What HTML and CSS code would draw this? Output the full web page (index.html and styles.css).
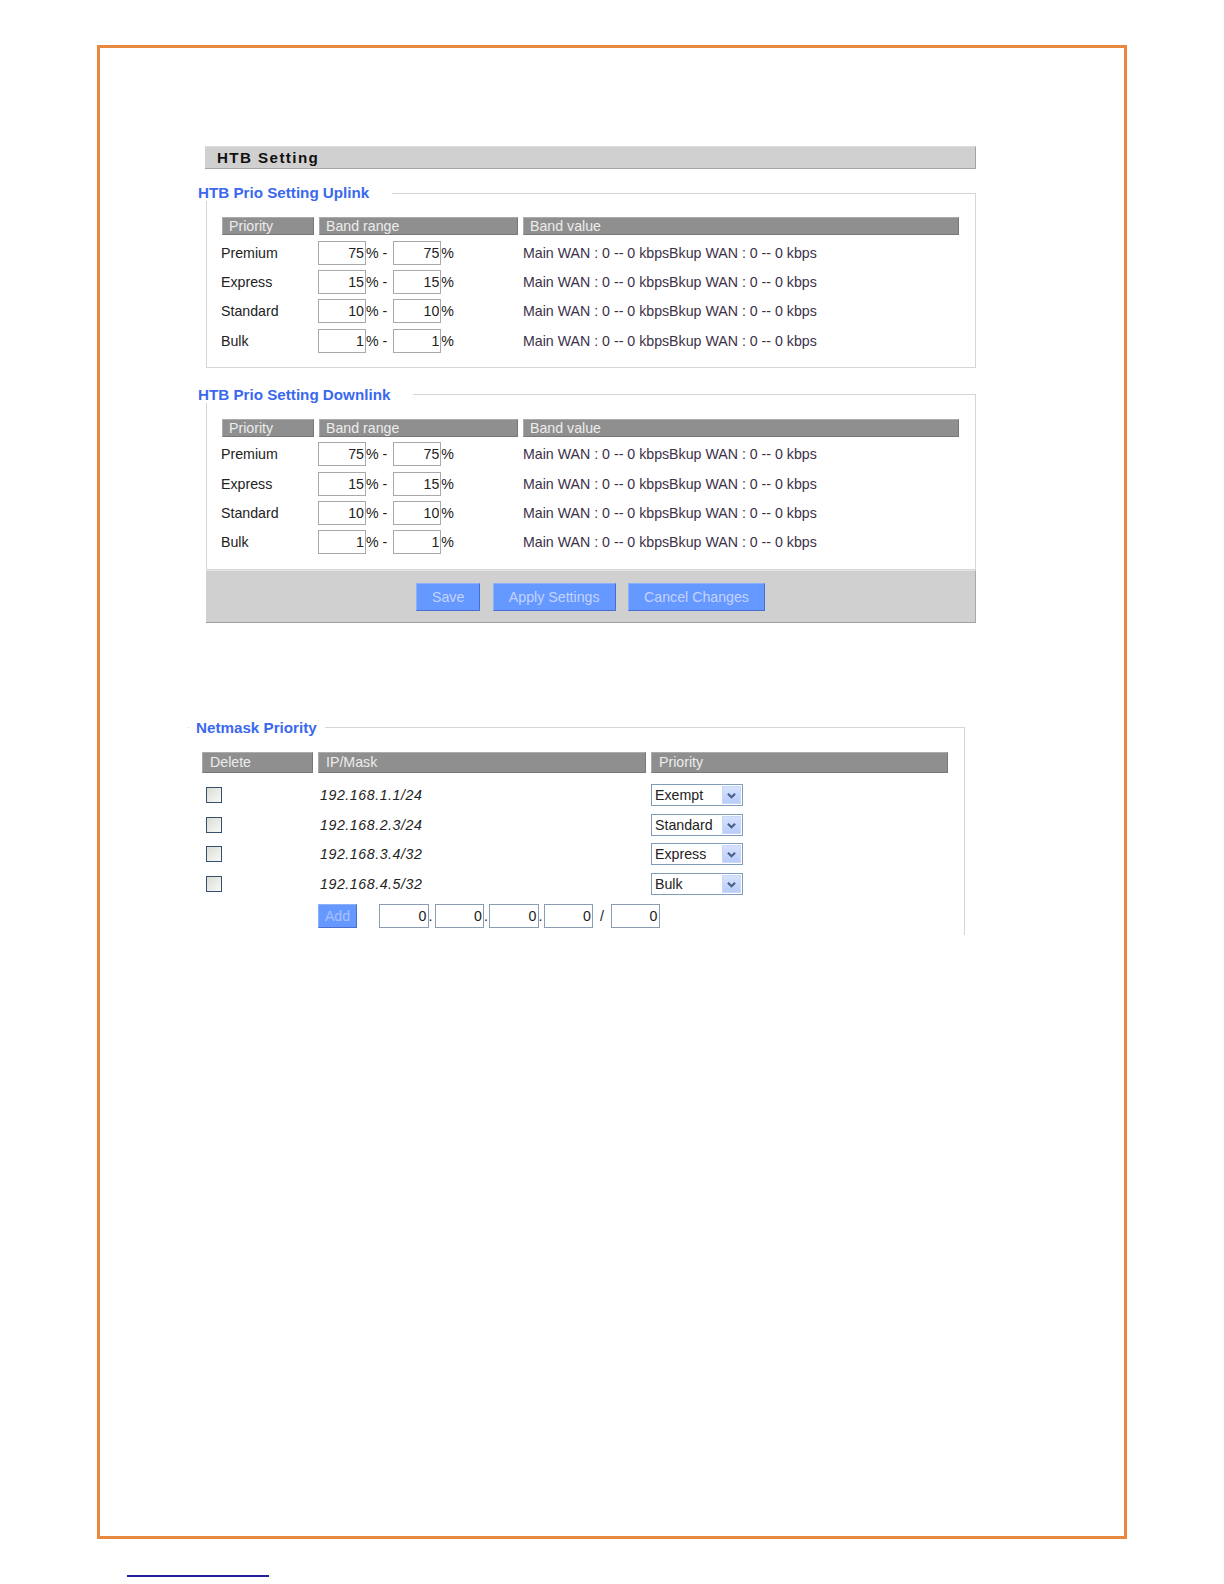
FILE: index.html
```html
<!DOCTYPE html>
<html lang="en">

<head>
    <meta charset="UTF-8" />
    <meta name="viewport" content="width=device-width, initial-scale=1" />
    <title>HTB Setting</title>
    <link rel="stylesheet" href="styles.css">
</head>

<body>
    <div class="sheet">
        <div class="panel">
            <div class="panel-title">HTB Setting</div>

            <fieldset class="prio-set">
                <legend>HTB Prio Setting Uplink</legend>
                <div class="prio-head">
                    <div class="th">Priority</div>
                    <div class="th">Band range</div>
                    <div class="th">Band value</div>
                </div>
                <div class="prio-row">
                    <div class="label">Premium</div>
                    <div class="range"><input type="text" value="75"><span class="unit">% -</span><input type="text" value="75"><span>%</span></div>
                    <div class="value">Main WAN : 0 -- 0 kbpsBkup WAN : 0 -- 0 kbps</div>
                </div>
                <div class="prio-row">
                    <div class="label">Express</div>
                    <div class="range"><input type="text" value="15"><span class="unit">% -</span><input type="text" value="15"><span>%</span></div>
                    <div class="value">Main WAN : 0 -- 0 kbpsBkup WAN : 0 -- 0 kbps</div>
                </div>
                <div class="prio-row">
                    <div class="label">Standard</div>
                    <div class="range"><input type="text" value="10"><span class="unit">% -</span><input type="text" value="10"><span>%</span></div>
                    <div class="value">Main WAN : 0 -- 0 kbpsBkup WAN : 0 -- 0 kbps</div>
                </div>
                <div class="prio-row">
                    <div class="label">Bulk</div>
                    <div class="range"><input type="text" value="1"><span class="unit">% -</span><input type="text" value="1"><span>%</span></div>
                    <div class="value">Main WAN : 0 -- 0 kbpsBkup WAN : 0 -- 0 kbps</div>
                </div>
            </fieldset>

            <fieldset class="prio-set down">
                <legend>HTB Prio Setting Downlink</legend>
                <div class="prio-head">
                    <div class="th">Priority</div>
                    <div class="th">Band range</div>
                    <div class="th">Band value</div>
                </div>
                <div class="prio-row">
                    <div class="label">Premium</div>
                    <div class="range"><input type="text" value="75"><span class="unit">% -</span><input type="text" value="75"><span>%</span></div>
                    <div class="value">Main WAN : 0 -- 0 kbpsBkup WAN : 0 -- 0 kbps</div>
                </div>
                <div class="prio-row">
                    <div class="label">Express</div>
                    <div class="range"><input type="text" value="15"><span class="unit">% -</span><input type="text" value="15"><span>%</span></div>
                    <div class="value">Main WAN : 0 -- 0 kbpsBkup WAN : 0 -- 0 kbps</div>
                </div>
                <div class="prio-row">
                    <div class="label">Standard</div>
                    <div class="range"><input type="text" value="10"><span class="unit">% -</span><input type="text" value="10"><span>%</span></div>
                    <div class="value">Main WAN : 0 -- 0 kbpsBkup WAN : 0 -- 0 kbps</div>
                </div>
                <div class="prio-row">
                    <div class="label">Bulk</div>
                    <div class="range"><input type="text" value="1"><span class="unit">% -</span><input type="text" value="1"><span>%</span></div>
                    <div class="value">Main WAN : 0 -- 0 kbpsBkup WAN : 0 -- 0 kbps</div>
                </div>
            </fieldset>

            <div class="button-bar">
                <button class="btn">Save</button>
                <button class="btn">Apply Settings</button>
                <button class="btn">Cancel Changes</button>
            </div>

            <fieldset class="netmask">
                <legend>Netmask Priority</legend>
                <div class="mask-head">
                    <div class="th">Delete</div>
                    <div class="th">IP/Mask</div>
                    <div class="th">Priority</div>
                </div>
                <div class="mask-row">
                    <div><input type="checkbox" class="check"></div>
                    <div class="ip">192.168.1.1/24</div>
                    <div class="select"><span>Exempt</span><span class="arrow"><svg width="19" height="18" viewBox="0 0 19 18"><polyline points="5.5,6.5 9.5,10.5 13.5,6.5" fill="none" stroke="#4b5f8a" stroke-width="2.4"/></svg></span></div>
                </div>
                <div class="mask-row">
                    <div><input type="checkbox" class="check"></div>
                    <div class="ip">192.168.2.3/24</div>
                    <div class="select"><span>Standard</span><span class="arrow"><svg width="19" height="18" viewBox="0 0 19 18"><polyline points="5.5,6.5 9.5,10.5 13.5,6.5" fill="none" stroke="#4b5f8a" stroke-width="2.4"/></svg></span></div>
                </div>
                <div class="mask-row">
                    <div><input type="checkbox" class="check"></div>
                    <div class="ip">192.168.3.4/32</div>
                    <div class="select"><span>Express</span><span class="arrow"><svg width="19" height="18" viewBox="0 0 19 18"><polyline points="5.5,6.5 9.5,10.5 13.5,6.5" fill="none" stroke="#4b5f8a" stroke-width="2.4"/></svg></span></div>
                </div>
                <div class="mask-row">
                    <div><input type="checkbox" class="check"></div>
                    <div class="ip">192.168.4.5/32</div>
                    <div class="select"><span>Bulk</span><span class="arrow"><svg width="19" height="18" viewBox="0 0 19 18"><polyline points="5.5,6.5 9.5,10.5 13.5,6.5" fill="none" stroke="#4b5f8a" stroke-width="2.4"/></svg></span></div>
                </div>
                <div class="add-row">
                    <button class="btn add">Add</button>
                    <input type="text" class="ip-box first" value="0"><span class="sep wide">.</span>
                    <input type="text" class="ip-box" value="0"><span class="sep">.</span>
                    <input type="text" class="ip-box" value="0"><span class="sep">.</span>
                    <input type="text" class="ip-box" value="0"><span class="slash">/</span>
                    <input type="text" class="ip-box bits" value="0">
                </div>
            </fieldset>
        </div>
    </div>
    <div class="page-rule"></div>
</body>

</html>
```

FILE: styles.css
```css
* {
    box-sizing: border-box;
}

body {
    margin: 0;
    font-family: "Liberation Sans", Arial, sans-serif;
    font-size: 14.2px;
    color: #222;
    background: #fff;
}

/* page frame */
.sheet {
    margin: 45px 0 0 97px;
    width: 1030px;
    height: 1494px;
    border: 3px solid #e8883f;
    padding: 98px 0 0 105px;
}

.panel {
    width: 771px;
}

.panel-title {
    height: 23px;
    background: #d0d0d0;
    border-top: 1px solid #dcdcdc;
    border-bottom: 1px solid #a4a4a4;
    border-right: 1px solid #a4a4a4;
    padding-left: 12px;
    font-weight: bold;
    font-size: 15.2px;
    letter-spacing: 1.4px;
    line-height: 21px;
    color: #111;
}

fieldset {
    min-inline-size: 0;
    margin: 0;
}

legend {
    font-weight: bold;
    font-size: 15.2px;
    line-height: 16px;
    color: #3a68ee;
}

.prio-set {
    margin: 16px 0 0 1px;
    padding: 16px 16px 11.5px 15px;
    border: 1px solid #d6d6d6;
}

.prio-set legend {
    margin-left: -24px;
    padding: 0 23px 0 0;
}

.prio-set.down {
    margin-top: 19px;
    padding-bottom: 12.3px;
}

.prio-head,
.prio-row {
    display: grid;
    grid-template-columns: 92px 199px 1fr;
    column-gap: 5px;
}

.th {
    height: 18px;
    background: #8f8f8f;
    border: 1px solid;
    border-color: #ababab #787878 #787878 #ababab;
    color: #ececec;
    padding-left: 6px;
    line-height: 16px;
    white-space: nowrap;
}

.prio-head {
    margin-bottom: 3px;
}

.prio-row {
    height: 29.3px;
    align-items: center;
}

.prio-row .label {
    margin-left: -1px;
}

.range {
    display: flex;
    align-items: center;
    margin-left: -1px;
}

input[type="text"] {
    width: 48px;
    height: 24px;
    border: 1px solid #a9a9a9;
    padding: 0 1px 0 0;
    margin: 0;
    text-align: right;
    font-family: "Liberation Sans", Arial, sans-serif;
    font-size: 14.2px;
    color: #222;
    background: #fff;
}

.range .unit {
    margin-right: 6px;
}

.value {
    color: #3c3148;
    white-space: nowrap;
}

/* buttons */
.button-bar {
    margin-left: 1px;
    height: 52.5px;
    background: #d0d0d0;
    border-top: 1px solid #e4e4e4;
    border-bottom: 1px solid #a0a0a0;
    border-right: 1px solid #a8a8a8;
    display: flex;
    justify-content: center;
    align-items: flex-start;
    gap: 12.5px;
    padding-top: 12px;
}

.btn {
    height: 28.3px;
    padding: 0 15px;
    background: #6699ff;
    border: 1px solid;
    border-color: #8cb0ff #4a6ecf #4a6ecf #8cb0ff;
    color: #c3d3ff;
    font-family: "Liberation Sans", Arial, sans-serif;
    font-size: 14.2px;
}

/* netmask */
.netmask {
    margin: 97px 11px 0 -17px;
    padding: 16px 16px 7px 14px;
    border: 1px solid #d6d6d6;
    border-left: none;
    border-bottom: none;
}

.netmask legend {
    margin-left: -13px;
    padding: 0 8px 0 7px;
}

.mask-head,
.mask-row {
    display: grid;
    grid-template-columns: 111px 328px 1fr;
    column-gap: 5px;
}

.mask-head .th {
    height: 21px;
    line-height: 19px;
    padding-left: 7px;
}

.mask-head {
    margin-bottom: 7.5px;
}

.mask-row {
    height: 29.6px;
    align-items: center;
}

.check {
    appearance: none;
    display: block;
    width: 16px;
    height: 16px;
    margin: 0 0 0 4px;
    border: 1px solid #34506e;
    background: linear-gradient(135deg, #dcdcd6, #f8f8f6);
}

.ip {
    font-style: italic;
    padding-left: 2px;
    letter-spacing: 0.55px;
}

.select {
    width: 92px;
    height: 22px;
    border: 1px solid #7f9db9;
    display: flex;
    align-items: center;
    justify-content: space-between;
    padding-left: 3px;
    background: #fff;
}

.select .arrow {
    width: 19px;
    height: 18px;
    margin-right: 1px;
    background: linear-gradient(#d6e2fe, #b9cdfb);
    border: 1px solid #c8d6f8;
    display: flex;
}

.select svg {
    display: block;
}

.add-row {
    display: flex;
    align-items: center;
    height: 24px;
    margin-top: 5.4px;
    padding-left: 116px;
}

.btn.add {
    height: 24px;
    width: 39px;
    padding: 0;
    color: #a8c0ff;
}

.ip-box {
    border-color: #8a9cb3 !important;
}

input.ip-box {
    width: 49.5px;
}

input.first {
    margin-left: 22px;
}

.sep {
    width: 5px;
}

.sep.wide {
    width: 6px;
}

.slash {
    width: 18px;
    text-align: center;
}

input.bits {
    width: 48.5px;
}

.page-rule {
    margin: 36px 0 0 127px;
    width: 142px;
    height: 2px;
    background: #1f1f99;
}
```
